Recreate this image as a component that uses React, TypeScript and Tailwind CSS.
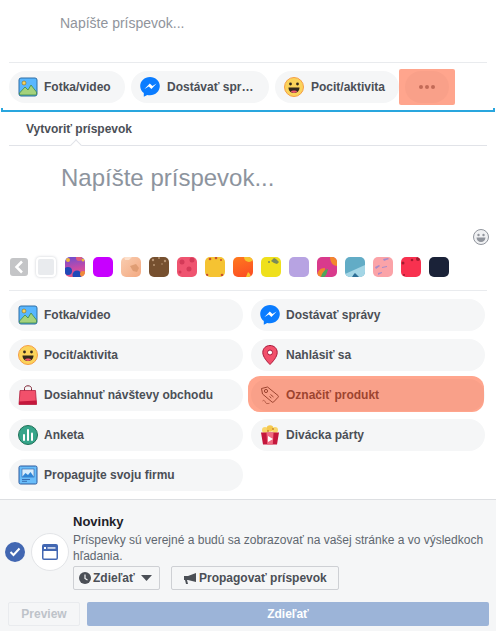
import React from "react";

const PhotoIcon = () => (
  <svg width="20" height="20" viewBox="0 0 20 20">
    <rect x="1" y="1" width="18" height="18" rx="2" fill="#58b7ff" stroke="#2f6ea5" />
    <circle cx="6" cy="6" r="2" fill="#f7d35c" stroke="#8a6d1e" strokeWidth="0.6" />
    <path d="M1.500 16l5.500-6 3 3 3-5 5.500 7v2a1 1 0 0 1-1 1h-15a1 1 0 0 1-1-1z" fill="#a4d27c" stroke="#3f8a4a" strokeWidth="0.8" />
  </svg>
);
const MessengerIcon = () => (
  <svg width="20" height="20" viewBox="0 0 20 20">
    <path d="M10 0C4.500 0 .2 4 .2 9.100c0 2.900 1.400 5.400 3.600 7v3.700l3.400-1.900c.9.300 1.800.4 2.800.4 5.500 0 9.800-4.100 9.800-9.200S15.500 0 10 0z" fill="#0a7cff" />
    <path d="M4.500 12l5.300-5.600 2.600 2.700 4.200-2.700-5.200 5.700-2.600-2.700z" fill="#fff" />
  </svg>
);
const SmileIcon = () => (
  <svg width="20" height="20" viewBox="0 0 20 20">
    <circle cx="10" cy="10" r="9.500" fill="#fbd35b" stroke="#f59d46" />
    <circle cx="6.500" cy="7" r="1.400" fill="#33281d" />
    <circle cx="13.500" cy="7" r="1.400" fill="#33281d" />
    <path d="M4.500 10.500h11c0 3.300-2.300 5.500-5.500 5.500s-5.500-2.200-5.500-5.500z" fill="#33281d" />
    <path d="M6.800 14.300c1-1 5.400-1 6.400 0-.8 1.100-1.900 1.700-3.200 1.700s-2.400-.6-3.200-1.700z" fill="#f0576b" />
  </svg>
);
const PinIcon = () => (
  <svg width="20" height="20" viewBox="0 0 20 20">
    <path d="M10 .5c-4.200 0-7.200 3-7.200 7 0 4.500 4.700 9.500 7.200 12 2.500-2.500 7.200-7.500 7.200-12 0-4-3-7-7.200-7z" fill="#f2506b" stroke="#a8183a" />
    <circle cx="10" cy="7.500" r="2.500" fill="#fff" stroke="#a8183a" />
  </svg>
);
const BagIcon = () => (
  <svg width="20" height="20" viewBox="0 0 20 20">
    <path d="M6.500 6V3.500C6.500 1.800 8 .8 10 .8s3.500 1 3.500 2.700V6" fill="none" stroke="#7c2232" />
    <path d="M2 5.500h15.500l1 14H1z" fill="#f2506b" stroke="#b0213f" strokeWidth="0.8" />
    <path d="M1 16.500l17.500-1 .2 3.800H1z" fill="#c4173c" />
  </svg>
);
const TagIcon = () => (
  <svg width="20" height="20" viewBox="0 0 20 20" fill="none" stroke="#4b4f56">
    <path d="M1.500 3.500l6-1.500 10.500 8.500a1.200 1.200 0 0 1 .1 1.700l-4.400 4.700a1.200 1.200 0 0 1-1.700.1L2.500 9z" />
    <circle cx="6" cy="6" r="1.600" />
    <path d="M10.500 9.500l3 2.500M9.500 11.500l1.800 1.500" />
    <path d="M2.500 16c1-1 2-1 3 1.500 .5 1 2 1.500 4 .7" strokeWidth="0.7" />
  </svg>
);
const PollIcon = () => (
  <svg width="20" height="20" viewBox="0 0 20 20">
    <circle cx="10" cy="10" r="9.500" fill="#36a58a" stroke="#1f7057" />
    <rect x="5" y="9" width="2" height="7" rx="1" fill="#fff" />
    <rect x="9" y="4" width="2" height="12" rx="1" fill="#fff" />
    <rect x="13" y="7.500" width="2" height="8.500" rx="1" fill="#fff" />
  </svg>
);
const PopcornIcon = () => (
  <svg width="20" height="20" viewBox="0 0 20 20">
    <circle cx="5" cy="5" r="3" fill="#f9d66b" />
    <circle cx="10" cy="3.500" r="3.300" fill="#f5c84e" />
    <circle cx="15" cy="5" r="3" fill="#f9d66b" />
    <circle cx="8" cy="6" r="1" fill="#c98a2a" />
    <circle cx="13" cy="4" r="1" fill="#c98a2a" />
    <path d="M1 7.500h18l-2 12H3z" fill="#c4173c" />
    <path d="M6.500 7.500l.7 12h5.600l.7-12z" fill="#f06a80" />
    <path d="M8 11l5 3-5 3z" fill="#fff" />
  </svg>
);
const PromoteIcon = () => (
  <svg width="20" height="20" viewBox="0 0 20 20">
    <rect x="1" y="1" width="18" height="18" rx="1.500" fill="#69bdfa" stroke="#2c5a9e" />
    <rect x="4" y="4" width="12" height="8" fill="#d7edfc" stroke="#2c5a9e" strokeWidth="0.6" />
    <path d="M4 12l3.500-4 2.500 2 2.500-3 3.500 5z" fill="#2f86d6" />
    <path d="M4 14.500h8M4 16.300h5" stroke="#2c5a9e" strokeWidth="0.8" />
  </svg>
);
const DotsIcon = () => (
  <svg width="16" height="4" viewBox="0 0 16 4" fill="#90949c">
    <circle cx="2" cy="2" r="2" />
    <circle cx="8" cy="2" r="2" />
    <circle cx="14" cy="2" r="2" />
  </svg>
);

const Pill = ({ icon, label, className = "" }: { icon: React.ReactNode; label: React.ReactNode; className?: string }) => (
  <div className={`flex h-8 items-center rounded-[16px] bg-[#f5f6f7] pl-[9px] text-[12px] font-bold text-[#4b4f56] ${className}`}>
    <span className="flex h-5 w-5 shrink-0 items-center justify-center">{icon}</span>
    {label}
  </div>
);

const Divider = () => <div className="mx-[9px] h-px bg-[#e9ebee]" />;

const Swatch = ({ className = "", children }: { className?: string; children?: React.ReactNode }) => (
  <div className={`h-5 w-5 shrink-0 overflow-hidden rounded-[5px] ${className}`}>
    {children && (
      <svg width="20" height="20" viewBox="0 0 20 20" className="block">
        {children}
      </svg>
    )}
  </div>
);

export default function App() {
  return (
    <div className="relative flex h-[631px] w-[496px] flex-col overflow-hidden bg-white font-['Liberation_Sans',Arial,sans-serif]">
      <div className="h-[62px] pl-[60px] pt-[15px] text-[14px] leading-[17px] text-[#90949c]">Napíšte príspevok...</div>
      <Divider />
      <div className="flex gap-[6px] pl-[9px] pt-[8px]">
        <Pill icon={<PhotoIcon />} label="Fotka/video" className="w-[116px] gap-[6px]" />
        <Pill icon={<MessengerIcon />} label="Dostávať spr…" className="w-[138px] gap-[7px]" />
        <Pill icon={<SmileIcon />} label="Pocit/aktivita" className="w-[124px] gap-[7px]" />
        <div className="flex h-8 w-11 items-center justify-center rounded-[16px] bg-[#f5f6f7]">
          <DotsIcon />
        </div>
      </div>
      <div className="mx-[1px] mt-[5px] h-[4px] border-x-2 border-b-2 border-[#29a6de]" />
      <div className="pl-[26px] pt-[10px] text-[12px] font-bold leading-[15px] text-[#4b4f56]">Vytvoriť príspevok</div>
      <div className="relative mx-[9px] mt-[8px] h-px bg-[#e1e3e8]">
        <div className="absolute -top-[4px] left-[63px] h-[8px] w-[8px] rotate-45 border-l border-t border-[#e1e3e8] bg-white" />
      </div>
      <div className="pl-[61px] pt-[17px] text-[24px] leading-[29px] text-[#8d949e]">Napíšte príspevok...</div>
      <div className="flex justify-end pr-[7px] pt-[37px]">
        <svg width="16" height="16" viewBox="0 0 16 16">
          <circle cx="8" cy="8" r="7.500" fill="#f0f1f3" stroke="#90949c" />
          <circle cx="5.500" cy="6" r="1.200" fill="#90949c" />
          <circle cx="10.500" cy="6" r="1.200" fill="#90949c" />
          <path d="M3.500 8.500h9c0 2.700-2 4.500-4.500 4.500s-4.500-1.800-4.500-4.500z" fill="#90949c" />
        </svg>
      </div>
      <div className="flex items-center gap-[8px] pl-[10px] pt-[12px]">
        <div className="flex h-[18px] w-[18px] items-center justify-center rounded-[3px] bg-[#c4c5c7]">
          <svg width="10" height="14" viewBox="0 0 10 14" fill="none" stroke="#fff" strokeWidth="2.500">
            <path d="M8 1.500L2.500 7 8 12.500" />
          </svg>
        </div>
        <div className="h-5 w-5 shrink-0 rounded-[4px] border-2 border-white bg-[#e9ebee] shadow-[0_0_3px_#c9ccd1]" />
        <Swatch className="ml-[1px] bg-[linear-gradient(170deg,#6a4fd0,#c64aa8_55%,#ef5f7a)]">
          <circle cx="3" cy="14" r="4" fill="#1f49b8" />
          <circle cx="12" cy="18" r="4.500" fill="#1f49b8" />
          <circle cx="18" cy="17" r="3" fill="#f08a3a" />
          <circle cx="3" cy="3" r="2" fill="#f0b63a" />
          <circle cx="14" cy="1" r="3" fill="#e05f7f" />
          <circle cx="18" cy="3" r="1.500" fill="#f0b63a" />
        </Swatch>
        <Swatch className="bg-[#c700ff]" />
        <Swatch className="bg-[linear-gradient(135deg,#f9cdb0,#f3a981)]">
          <path d="M9 9l6-2 3 4-2 4-4-1z" fill="#d9966c" opacity="0.8" />
          <path d="M3 0h8l-3 3H4z" fill="#fde0cc" />
        </Swatch>
        <Swatch className="bg-[#76502f]">
          <circle cx="4" cy="3" r="1.200" fill="#b89473" />
          <circle cx="10" cy="1" r="1" fill="#b89473" />
          <circle cx="16" cy="4" r="1.200" fill="#b89473" />
          <circle cx="5" cy="8" r="1" fill="#b89473" />
          <circle cx="13" cy="7" r="0.800" fill="#b89473" />
        </Swatch>
        <Swatch className="bg-[#ef5470]">
          <circle cx="5" cy="5" r="2.500" fill="#d43a58" />
          <circle cx="15" cy="3" r="2.500" fill="#d43a58" />
          <circle cx="12" cy="12" r="2.500" fill="#d43a58" />
          <circle cx="3" cy="15" r="1.500" fill="#d43a58" />
        </Swatch>
        <Swatch className="bg-[#f5c332]">
          <circle cx="5" cy="2" r="1.300" fill="#c8502c" />
          <circle cx="11" cy="1" r="1.300" fill="#c8502c" />
          <circle cx="16" cy="3" r="1" fill="#c8502c" />
          <circle cx="2" cy="18" r="1.300" fill="#c8502c" />
          <circle cx="17" cy="18" r="1.300" fill="#c8502c" />
        </Swatch>
        <Swatch className="bg-[linear-gradient(160deg,#ff7a1e,#fb4a25)]">
          <circle cx="16" cy="0" r="5" fill="#f6c52e" />
          <path d="M13 20l2-5 2 2 1 3z" fill="#f6c52e" />
        </Swatch>
        <Swatch className="bg-[#efe01c]">
          <path d="M10 4l3-3 2 1 3 3-2 2-3-1z" fill="#7a8a58" />
          <circle cx="8" cy="5" r="1" fill="#7a8a58" />
        </Swatch>
        <Swatch className="bg-[#b7a3e2]" />
        <Swatch className="bg-[#d93a8c]">
          <path d="M13 0h7v9c-4 0-7-4-7-9z" fill="#f3872c" />
          <path d="M0 20c0-6 3-9 8-9 0 4-2 8-4 9z" fill="#f3872c" />
          <path d="M4 20c1-4 3-7 7-8-1 4-2 7-4 8z" fill="#4ea65a" />
        </Swatch>
        <Swatch className="bg-[#62acc6]">
          <path d="M0 17L20 8v12H0z" fill="#a4d6e6" />
          <path d="M7 20l2-3 1-1 1 1 3 3z" fill="#2d6f96" />
        </Swatch>
        <Swatch className="bg-[#fba3a8]">
          <path d="M10 2l5-1 1 1-5 2zM2 10l4-2 1 1-4 3zM9 10l5-1v1l-5 1zM5 16l4-1v1l-4 2z" fill="#a78bc9" />
        </Swatch>
        <Swatch className="bg-[#f8314f]">
          <circle cx="2" cy="6" r="1.500" fill="#a51a2f" />
          <circle cx="11" cy="3" r="1.300" fill="#a51a2f" />
          <circle cx="17" cy="2" r="2" fill="#a51a2f" />
          <circle cx="3" cy="18" r="1" fill="#a51a2f" />
        </Swatch>
        <Swatch className="bg-[#1a2238]" />
      </div>
      <div className="mx-[9px] mt-[13px] h-px bg-[#e9ebee]" />
      <div className="grid grid-cols-[234px_234px] gap-x-[8px] gap-y-[8px] pl-[9px] pt-[8px]">
        <Pill icon={<PhotoIcon />} label="Fotka/video" className="gap-[6px]" />
        <Pill icon={<MessengerIcon />} label="Dostávať správy" className="gap-[6px]" />
        <Pill icon={<SmileIcon />} label="Pocit/aktivita" className="gap-[6px]" />
        <Pill icon={<PinIcon />} label="Nahlásiť sa" className="gap-[6px]" />
        <Pill icon={<BagIcon />} label="Dosiahnuť návštevy obchodu" className="gap-[6px]" />
        <Pill icon={<TagIcon />} label="Označiť produkt" className="gap-[6px]" />
        <Pill icon={<PollIcon />} label="Anketa" className="gap-[6px]" />
        <Pill icon={<PopcornIcon />} label="Divácka párty" className="gap-[6px]" />
        <Pill icon={<PromoteIcon />} label="Propagujte svoju firmu" className="gap-[6px]" />
      </div>
      <div className="mt-[8px] flex-1 border-t border-[#dddfe2] bg-[#f5f6f7]">
        <div className="flex pt-[13px]">
          <div className="flex w-[73px] shrink-0 items-center gap-[6px] self-start pl-[5px] pt-[20px]">
            <div className="flex h-5 w-5 shrink-0 items-center justify-center rounded-full bg-[#4267b2]">
              <svg width="12" height="10" viewBox="0 0 12 10" fill="none" stroke="#fff" strokeWidth="2">
                <path d="M1.500 5l3 3 6-6.500" />
              </svg>
            </div>
            <div className="flex h-[38px] w-[38px] shrink-0 items-center justify-center rounded-full border border-[#e3e5e8] bg-white">
              <svg width="16" height="16" viewBox="0 0 16 16">
                <rect width="16" height="16" rx="2" fill="#4267b2" />
                <rect x="1.500" y="7" width="13" height="7.500" rx="0.500" fill="#fff" />
                <rect x="2" y="3" width="2" height="2" fill="#fff" />
                <rect x="5.500" y="3.300" width="8" height="1.300" fill="#fff" />
              </svg>
            </div>
          </div>
          <div className="flex-1">
            <div className="text-[13px] font-bold leading-[17px] text-[#1d2129]">Novinky</div>
            <div className="w-[415px] pt-[2px] text-[12px] leading-[16px] text-[#606770]">
              Príspevky sú verejné a budú sa zobrazovať na vašej stránke a vo výsledkoch hľadania.
            </div>
            <div className="flex gap-[11px] pt-[2px]">
              <div className="flex h-6 w-[87px] items-center gap-[2px] rounded-[2px] border border-[#ced0d4] bg-[#f5f6f7] pl-[5px] text-[12px] font-bold text-[#4b4f56]">
                <svg width="12" height="12" viewBox="0 0 12 12">
                  <circle cx="6" cy="6" r="6" fill="#4b4f56" />
                  <path d="M6 2.500V6.500L8.500 8" fill="none" stroke="#f5f6f7" strokeWidth="1.200" />
                </svg>
                Zdieľať
                <svg width="12" height="6" viewBox="0 0 12 6" className="ml-[4px]" fill="#4b4f56">
                  <path d="M0 0h11L5.500 6z" />
                </svg>
              </div>
              <div className="flex h-6 w-[168px] items-center gap-[3px] rounded-[2px] border border-[#ced0d4] bg-[#f5f6f7] pl-[12px] text-[12px] font-bold text-[#4b4f56]">
                <svg width="12" height="11" viewBox="0 0 12 11" fill="#4b4f56">
                  <path d="M0 3h4l8-3v9L4 7H3l1 4H2L1 7H0z" />
                </svg>
                Propagovať príspevok
              </div>
            </div>
          </div>
        </div>
        <div className="flex gap-[7px] pl-[8px] pt-[12px]">
          <div className="flex h-6 w-[72px] items-center justify-center rounded-[2px] border border-[#e9ebee] text-[12px] font-bold text-[#bec3c9]">Preview</div>
          <div className="flex h-6 w-[402px] items-center justify-center rounded-[2px] bg-[#9cb4d8] text-[12px] font-bold text-white">Zdieľať</div>
        </div>
      </div>
      <div className="absolute left-[399px] top-[69px] h-[36px] w-[56px] rounded-[2px] bg-[rgba(255,55,3,0.45)]" />
      <div className="absolute left-[248px] top-[376px] h-[36px] w-[236px] rounded-[12px] bg-[rgba(255,55,3,0.45)]" />
    </div>
  );
}
